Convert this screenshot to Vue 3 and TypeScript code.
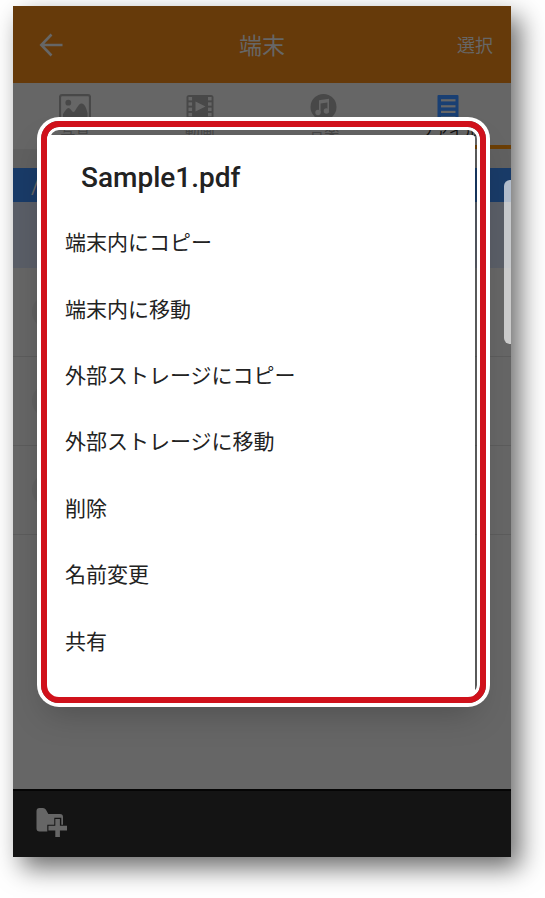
<script setup lang="ts">
type TabIcon = 'photo' | 'video' | 'music' | 'file'

interface Tab {
  icon: TabIcon
  label: string
  active: boolean
}

const tabs: Tab[] = [
  { icon: 'photo', label: '写真', active: false },
  { icon: 'video', label: '動画', active: false },
  { icon: 'music', label: '音楽', active: false },
  { icon: 'file', label: 'ファイル', active: true },
]

const rows: number[] = [1, 2, 3]

const actions: string[] = [
  '端末内にコピー',
  '端末内に移動',
  '外部ストレージにコピー',
  '外部ストレージに移動',
  '削除',
  '名前変更',
  '共有',
]
</script>

<template>
  <div class="phone">
    <header class="bar">
      <button class="back" type="button" aria-label="戻る">
        <svg width="24" height="24" viewBox="0 0 24 24" fill="none" stroke="currentColor" stroke-width="2.6">
          <path d="M12.5 1.5 2.3 12l10.2 10.5M2.5 12H23.5" />
        </svg>
      </button>
      <h1 class="title">端末</h1>
      <button class="select" type="button">選択</button>
    </header>

    <nav class="tabs">
      <button v-for="tab in tabs" :key="tab.icon" type="button" class="tab" :class="{ active: tab.active }">
        <svg v-if="tab.icon === 'photo'" width="32" height="28" viewBox="0 0 32 28">
          <rect x="1" y="1.2" width="30" height="25.5" rx="2" fill="none" stroke="currentColor" stroke-width="2.2" />
          <circle cx="9.3" cy="8.7" r="2.9" fill="currentColor" />
          <path d="M4 23V20C6 17 8 14 9.5 14C11.5 14 13 18 14.5 18C16.5 18 19 9.5 22.5 9.5C26 9.5 27.5 15 28.5 19V23Z" fill="currentColor" />
        </svg>
        <svg v-else-if="tab.icon === 'video'" width="32" height="28" viewBox="0 0 32 28">
          <rect x="2.5" y="1" width="27" height="26" rx="2.5" fill="currentColor" />
          <g class="cut">
            <rect x="4.5" y="3" width="3.6" height="3.4" /><rect x="4.5" y="8.3" width="3.6" height="3.4" />
            <rect x="4.5" y="13.6" width="3.6" height="3.4" /><rect x="4.5" y="18.9" width="3.6" height="3.4" />
            <rect x="24" y="3" width="3.6" height="3.4" /><rect x="24" y="8.3" width="3.6" height="3.4" />
            <rect x="24" y="13.6" width="3.6" height="3.4" /><rect x="24" y="18.9" width="3.6" height="3.4" />
            <path d="M11.5 7.5 21.5 12.5 11.5 17.5Z" />
          </g>
        </svg>
        <svg v-else-if="tab.icon === 'music'" width="32" height="28" viewBox="0 0 32 28">
          <circle cx="15.5" cy="13" r="13" fill="currentColor" />
          <g class="cut">
            <path d="M11 6.2 21 4.8V17H19.4V8.5L12.6 9.5V18.5H11Z" />
            <circle cx="10" cy="18.5" r="2.7" /><circle cx="18.4" cy="17" r="2.7" />
          </g>
        </svg>
        <svg v-else width="32" height="28" viewBox="0 0 32 28">
          <rect x="4.5" y="1" width="21" height="26" rx="1" fill="currentColor" />
          <g class="cut">
            <rect x="8" y="5.2" width="14.5" height="2.2" /><rect x="8" y="11.2" width="14.5" height="2.2" />
            <rect x="8" y="16.8" width="14.5" height="2.2" /><rect x="8" y="22.5" width="14.5" height="2.2" />
          </g>
        </svg>
        <span>{{ tab.label }}</span>
      </button>
    </nav>

    <main class="files">
      <div class="path">/</div>
      <div class="row current"></div>
      <div v-for="row in rows" :key="row" class="row"><i class="dot"></i></div>
      <span class="handle"></span>
    </main>

    <footer class="tools">
      <button type="button" class="add" aria-label="フォルダ作成">
        <svg width="32" height="30" viewBox="0 0 32 30">
          <path d="M.5 4Q.5 1 3.5 1H7Q8.800 1 9.800 2.600L12.300 7H24Q27 7 27 10V24.500H3.500Q.5 24.500 .5 21.500Z" fill="#666" />
          <path d="M18.300 10.800H25.300V17.800H32V25.800H25.300V30H18.300V25.800H11.300V17.800H18.300Z" fill="#141414" />
          <path d="M19.300 12H23.900V18.800H31V23.400H23.900V30H19.300V23.400H12.400V18.800H19.300Z" fill="#666" />
        </svg>
      </button>
    </footer>

    <section class="dialog" role="dialog" aria-labelledby="dialog-title">
      <h2 id="dialog-title">Sample1.pdf</h2>
      <ul>
        <li v-for="action in actions" :key="action">
          <button type="button">{{ action }}</button>
        </li>
      </ul>
      <div class="marker"></div>
    </section>
  </div>
</template>

<style>
body {
  margin: 0;
  background: #fff;
}
</style>

<style scoped>
.phone {
  position: relative;
  margin: 6px 34px 41px 13px;
  background: #666;
  color: #666;
  font-family: Roboto, "Noto Sans CJK JP", sans-serif;
  box-shadow: 9px 11px 24px rgba(0, 0, 0, 0.58);
}

button {
  border: 0;
  padding: 0;
  background: none;
  color: inherit;
  font: inherit;
}

svg {
  display: block;
}

.bar {
  display: grid;
  grid-template-columns: 1fr auto 1fr;
  align-items: center;
  height: 77px;
  padding: 0 18px 0 26px;
  background: #663a0a;
}

.back {
  justify-self: start;
}

.title {
  margin: 0;
  padding: 4px 8px 0 0;
  font-size: 23px;
  line-height: 32px;
  font-weight: 400;
}

.select {
  justify-self: end;
  padding-top: 2px;
  font-size: 18px;
  line-height: 28px;
}

.tabs {
  display: grid;
  grid-template-columns: repeat(4, 1fr);
  height: 66px;
}

.tab {
  display: flex;
  flex-direction: column;
  align-items: center;
  padding-top: 11px;
  color: #484848;
  border-bottom: 4px solid transparent;
  font-size: 15px;
  line-height: 20px;
}

.tab.active {
  color: #193f73;
  border-color: #6b3e05;
}

.tab.active span {
  color: #111;
}

.cut {
  fill: #666;
}

.files {
  position: relative;
  height: 640px;
  padding-top: 19px;
  box-sizing: border-box;
  background: linear-gradient(#606060 20px, #666 20px);
}

.path {
  height: 34px;
  padding-left: 18px;
  background: #193b68;
  font-size: 20px;
  line-height: 38px;
}

.row {
  display: flex;
  align-items: center;
  height: 88px;
  padding-left: 19px;
  border-bottom: 1px solid #5c5c5c;
}

.row.current {
  height: 66px;
  border: 0;
  background: #5a5e67;
}

.dot {
  width: 34px;
  height: 34px;
  border-radius: 50%;
  background: #616161;
}

.handle {
  position: absolute;
  top: 31px;
  right: 0;
  width: 7px;
  height: 164px;
  border-radius: 6px 0 0 6px;
  background: rgba(255, 255, 255, 0.67);
}

.tools {
  height: 66px;
  border-top: 2px solid #050505;
  background: #141414;
}

.add {
  display: block;
  padding: 16px 0 0 23px;
}

.dialog {
  position: absolute;
  top: 129px;
  left: 34px;
  right: 36px;
  box-sizing: border-box;
  min-height: 562px;
  padding: 24px 18px 22px;
  border-radius: 3px;
  background: #fff;
  color: #222;
  box-shadow: 0 14px 34px rgba(0, 0, 0, 0.25);
}

.dialog h2 {
  margin: 0 0 13px 16px;
  font-size: 28px;
  line-height: 38px;
  font-weight: 500;
}

.dialog ul {
  display: grid;
  grid-auto-rows: 1fr;
  min-height: 465px;
  margin: 0;
  padding: 0;
  list-style: none;
}

.dialog li {
  display: flex;
}

.dialog li button {
  flex: 1;
  text-align: left;
  font-size: 21px;
  line-height: 30px;
}

.marker {
  position: absolute;
  inset: -14px -11px -6px -6px;
  border: 6px solid #d0111b;
  border-radius: 18px;
  box-shadow: 0 0 0 4px #fff, inset 0 0 0 3px #fff;
  pointer-events: none;
}
</style>
